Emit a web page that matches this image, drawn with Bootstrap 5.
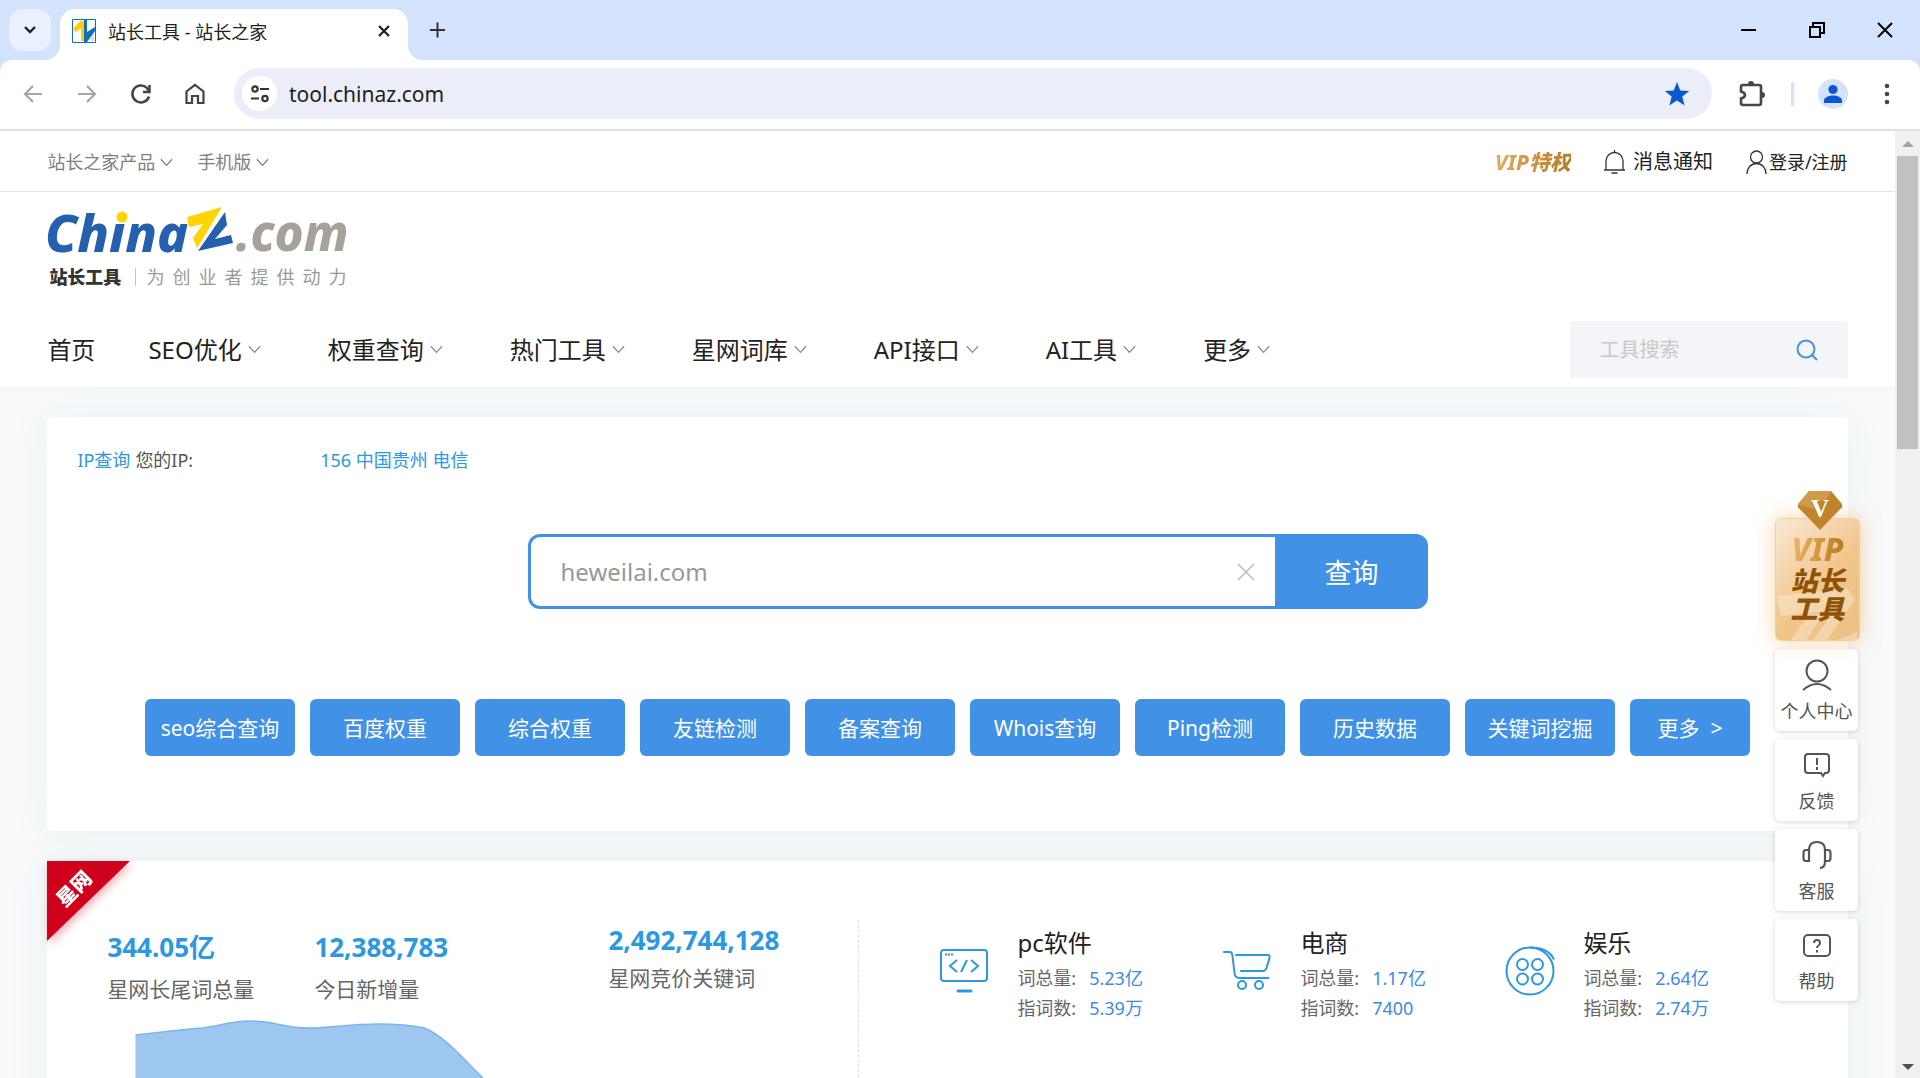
<!DOCTYPE html>
<html lang="zh-CN">
<head>
<meta charset="utf-8">
<meta name="viewport" content="width=device-width, initial-scale=1">
<title>站长工具 - 站长之家</title>
<link href="https://cdn.jsdelivr.net/npm/bootstrap@5.3.0/dist/css/bootstrap.min.css" rel="stylesheet">
<style>
:root { --blue: #4191e6; --sky: #2b98e2; --ink: #222; --muted: #666; }
body { font-family: "Noto Sans", "Noto Sans CJK SC", sans-serif; font-weight: 400; font-size: 18px; line-height: 28px; color: var(--ink); background: #d3e2fd; }
a { color: inherit; text-decoration: none; }
svg { display: block; flex: none; }
button { font-family: inherit; }
.plain-btn { border: 0; background: none; padding: 0; color: inherit; display: flex; align-items: center; justify-content: center; }

/* browser window */
.tab-strip { height: 60px; padding: 9px 0 0 9px; }
.tab-search { width: 42px; height: 42px; border-radius: 14px; background: #e9f1fe; }
.open-tab { position: relative; width: 348px; height: 51px; margin-left: 9px; padding: 0 16px 8px 12px; border-radius: 15px 15px 0 0; background: #fff; }
.open-tab::before, .open-tab::after { content: ""; position: absolute; bottom: 0; width: 15px; height: 15px; }
.open-tab::before { left: -15px; background: radial-gradient(circle at 0 0, transparent 15px, #fff 15px); }
.open-tab::after { right: -15px; background: radial-gradient(circle at 100% 0, transparent 15px, #fff 15px); }
.tab-name { font-size: 18px; margin-left: 12px; padding-top: 2px; }
.new-tab { margin-left: 22px; }
.win-keys { gap: 52px; padding: 0 27px 9px 0; }
.tool-row { height: 71px; background: #fff; border-bottom: 2px solid #e0e0e0; border-radius: 12px 12px 0 0; padding: 0 30px 2px 22px; }
.tool-keys { gap: 31px; }
.address { height: 51px; border-radius: 26px; background: #ebeef8; margin-left: 27px; padding: 0 22px 0 8px; }
.site-info { width: 35px; height: 35px; border-radius: 50%; background: #fff; }
.address input { border: 0; background: none; outline: 0; font-size: 21px; color: #1f1f1f; margin-left: 12px; padding: 0; }
.tool-end { margin-left: 27px; }
.tool-split { width: 3px; height: 24px; border-radius: 2px; background: #d3e2fd; margin: 0 24px 0 25px; }
.avatar { width: 30px; height: 30px; border-radius: 50%; background: #d3e2fd; margin-right: 36px; }
.scroll-rail { width: 25px; background: #f0f0f0; padding: 10px 2px 8px; }
.scroll-thumb { width: 21px; height: 293px; background: #c1c1c1; margin-top: 9px; }

/* site */
.site { background: #f8fafc; min-height: 0; }
.wrap { width: 95%; margin: 0 auto; }
.top-line { height: 61px; border-bottom: 1px solid #e8e8e8; padding-top: 2px; }
.top-line a { gap: 5px; }
.top-left { gap: 24px; color: #7b8088; }
.top-right { gap: 33px; }
.gold { background: linear-gradient(100deg, #e3ae63, #b87a22); -webkit-background-clip: text; background-clip: text; color: transparent; font-weight: 800; font-style: italic; }
.top-right .gold { font-size: 21px; }
.top-right .notice { font-size: 20px; gap: 8px; }
.top-right .signin { gap: 2px; }
.masthead { height: 195px; background: #fff; box-shadow: 0 2px 6px rgba(40,60,80,.04); }
.logo-box { padding-top: 13px; }
.logo-word { font: italic 800 52px "Noto Sans", sans-serif; overflow: visible; }
.logo-word .tail { font-size: 49px; }
.logo-tag { height: 20px; font-size: 18px; line-height: 20px; margin-top: 8px; padding-left: 2px; }
.logo-tag b { font-weight: 800; color: #333; }
.logo-tag i { width: 1px; height: 18px; background: #c4c4c4; margin: 0 10px 0 14px; }
.logo-tag .motto { gap: 8px; color: #9a9a9a; }
.main-nav { margin-top: 34px; font-size: 24px; line-height: 34px; }
.main-nav ul { gap: 53px; }
.main-nav li a { gap: 6px; }
.main-nav .drops { padding-right: 14px; }
.site-search { width: 278px; height: 57px; background: #f3f5f9; border-radius: 4px 4px 0 0; padding: 0 30px; }
.site-search input { border: 0; outline: 0; background: none; padding: 0; font-size: 20px; }
.site-search input::placeholder { color: #c8c8c8; }
.panel { background: #fff; border-radius: 5px; box-shadow: 0 0 45px rgba(20,100,90,.06); margin-top: 30px; position: relative; }
.panel-query { height: 414px; padding: 29px 30px; }
.ip-line { color: #555; gap: 5px; }
.ip-line a { color: var(--sky); }
.ip-line .where { margin-left: 122px; }
.query-form { width: 900px; height: 75px; margin: 60px auto 0; border: 3px solid var(--blue); border-radius: 12px; background: var(--blue); overflow: hidden; }
.query-field { background: #fff; padding: 0 20px 0 30px; }
.query-field input { border: 0; outline: 0; padding: 0; font-size: 24px; color: #999; background: none; }
.query-form .go { width: 150px; border: 0; background: var(--blue); color: #fff; font-size: 27px; padding: 3px 0 0 4px; }
.quick { gap: 15px; margin-top: 90px; }
.quick .btn { width: 150px; height: 57px; background: var(--blue); border: 0; border-radius: 6px; color: #fff; font-size: 21px; line-height: 58px; padding: 0; white-space: nowrap; }
.quick .btn-more { width: 120px; }
.query-shift { padding-left: 60px; }
.panel-data { height: 360px; border-radius: 0; }
.ribbon { position: absolute; left: 0; top: 0; filter: drop-shadow(2px 4px 4px rgba(208,0,30,.3)); }
.ribbon text { font: 800 20px "Noto Sans CJK SC", sans-serif; fill: #fff; }
.totals { width: 811px; padding: 67px 0 0 60px; }
.totals strong { display: block; font-size: 26px; line-height: 38px; font-weight: 700; color: var(--sky); }
.totals span { display: block; font-size: 21px; line-height: 30px; color: var(--muted); margin-top: 8px; }
.total-a { width: 207px; }
.total-b { width: 294px; }
.totals .high { margin-top: -7px; }
.totals .high span { margin-top: 4px; }
.trend { margin: 12px 0 0 28px; }
.fields { border-left: 1px dashed #ddd; margin-top: 59px; padding: 6px 0 0 80px; }
.field { width: 283px; gap: 28px; }
.field svg { margin-top: 20px; width: 50px; }
.field h2 { font-size: 24px; line-height: 34px; font-weight: 400; margin: 0 0 3px; }
.field p { margin: 0; line-height: 30px; color: var(--muted); }
.field a { color: #3c8ae8; margin-left: 13px; }

/* floating column at the right edge */
.float-col { position: absolute; right: 36px; top: 360px; width: 84px; }
.vip-card { display: block; position: relative; width: 85px; height: 123px; margin: 27px 0 8px; border-radius: 6px; border: 1px solid #f5cf9b; background: linear-gradient(135deg, #fae9d6, #f1c58b 55%, #edc082); box-shadow: 0 0 20px rgba(245,175,90,.55); text-align: center; padding-top: 12px; font-style: italic; font-weight: 900; font-size: 27px; line-height: 28px; color: #8f5307; }
.vip-card .stripes { position: absolute; right: 0; bottom: 0; }
.vip-card .caption { position: relative; display: block; }
.vip-card .gem { position: absolute; left: 22px; top: -28px; }
.vip-card .gem text { font: 700 25px "Liberation Serif", serif; fill: #fff; }
.vip-card .gold { display: block; font-size: 32px; line-height: 36px; background-image: linear-gradient(100deg, #f0b565 20%, #b87a22 80%); }
.side-key { width: 83px; height: 82px; margin-bottom: 8px; border-radius: 5px; background: #fff; box-shadow: 0 1px 5px rgba(0,0,0,.16); color: #555; padding: 10px 0 6px; white-space: nowrap; }
</style>
<script src="https://cdn.jsdelivr.net/npm/bootstrap@5.3.0/dist/js/bootstrap.bundle.min.js"></script>
</head>
<body class="vh-100 d-flex flex-column overflow-hidden">
<svg width="0" height="0" class="position-absolute" aria-hidden="true">
  <symbol id="chev" viewBox="0 0 14 9"><path d="M1 1l6 6.500L13 1" fill="none" stroke="currentColor" stroke-width="1.300"/></symbol>
</svg>

<div class="tab-strip d-flex align-items-start flex-shrink-0">
  <button class="plain-btn tab-search" aria-label="搜索标签页"><svg width="14" height="10" viewBox="0 0 14 10"><path d="M2 2l5 5 5-5" fill="none" stroke="#1f1f1f" stroke-width="2.400"/></svg></button>
  <div class="open-tab d-flex align-items-center">
    <svg width="24" height="24" viewBox="0 0 24 24"><path d="M.5 .5h23v23H.5z" fill="#fff" stroke="#0f6fb8"/><path d="M1 10L8 2h4v20H9V9l-5 4z" fill="#fc0"/><path d="M12 1h3v12l8-5v4l-8 11h-3z" fill="#0f6fb8"/><path d="M17 21l5-7v8z" fill="#cfe2f3"/></svg>
    <span class="tab-name flex-grow-1">站长工具 - 站长之家</span>
    <button class="plain-btn" aria-label="关闭标签页"><svg width="16" height="16" viewBox="0 0 16 16"><path d="M3 3l10 10M13 3L3 13" stroke="#1f1f1f" stroke-width="2.200"/></svg></button>
  </div>
  <button class="plain-btn new-tab" aria-label="新建标签页"><svg width="16" height="42" viewBox="0 0 16 42"><path d="M0 21h15M7.500 13.500v15" stroke="#333" stroke-width="2"/></svg></button>
  <div class="win-keys d-flex align-items-center ms-auto h-100">
    <button class="plain-btn" aria-label="最小化"><svg width="16" height="16"><path d="M0 8h15" stroke="#000" stroke-width="2"/></svg></button>
    <button class="plain-btn" aria-label="还原"><svg width="16" height="16" fill="none" stroke="#000" stroke-width="2"><path d="M1 5h10v10H1zM4 4V1h11v10h-3"/></svg></button>
    <button class="plain-btn" aria-label="关闭"><svg width="16" height="16"><path d="M1 1l14 14M15 1L1 15" stroke="#000" stroke-width="2"/></svg></button>
  </div>
</div>

<div class="tool-row d-flex align-items-center flex-shrink-0">
  <div class="tool-keys d-flex">
    <button class="plain-btn" aria-label="后退"><svg width="23" height="22" fill="none" stroke="#a6a6a6" stroke-width="2.200"><path d="M20 11H3M11 3l-8 8 8 8"/></svg></button>
    <button class="plain-btn" aria-label="前进"><svg width="23" height="22" fill="none" stroke="#a6a6a6" stroke-width="2.200"><path d="M2 11h17M11 3l8 8-8 8"/></svg></button>
    <button class="plain-btn" aria-label="刷新"><svg width="23" height="22" fill="none" stroke="#444" stroke-width="2.500"><path d="M19 13.500A8.500 8.500 0 1 1 17 5l2 3"/><path d="M19.500 2v7H13"/></svg></button>
    <button class="plain-btn" aria-label="主页"><svg width="23" height="22" fill="none" stroke="#444" stroke-width="2.200"><path d="M2.500 20V8.500L11 2l8.500 6.500V20H14v-7H8v7z"/></svg></button>
  </div>
  <div class="address d-flex align-items-center flex-grow-1">
    <button class="plain-btn site-info" aria-label="网站信息"><svg width="20" height="18" fill="none" stroke="#333" stroke-width="2.200"><circle cx="5" cy="4" r="2.700"/><path d="M10 4h9M1 13.500h8"/><circle cx="15" cy="13.500" r="2.700"/></svg></button>
    <input class="flex-grow-1" type="text" aria-label="地址栏" value="tool.chinaz.com">
    <button class="plain-btn" aria-label="收藏"><svg width="26" height="26" viewBox="0 0 24 24"><path d="M12 1l3 7.700 8.300.5-6.400 5.200 2.100 8.100L12 18l-7 4.500 2.100-8.100L.7 9.200 9 8.700z" fill="#0b57d0"/></svg></button>
  </div>
  <div class="tool-end d-flex align-items-center">
    <button class="plain-btn" aria-label="扩展程序"><svg width="27" height="28" viewBox="0 0 27 28"><path d="M4 5h16q2 0 2 2v16q0 2-2 2H4q-2 0-2-2v-4.500q4-1 4-3.500t-4-3.500V7q0-2 2-2z" fill="none" stroke="#474747" stroke-width="2.600"/><path d="M9 4a3 3 0 0 1 6 0zM23 12a3 3 0 0 1 0 6z" fill="#474747"/></svg></button>
    <span class="tool-split"></span>
    <button class="plain-btn avatar" aria-label="个人资料"><svg width="20" height="20" fill="#0b57d0"><circle cx="10" cy="5.500" r="4.600"/><path d="M1 19v-2.500C1 13 6 11.500 10 11.500s9 1.500 9 5V19z"/></svg></button>
    <button class="plain-btn" aria-label="菜单"><svg width="6" height="22" fill="#474747"><circle cx="3" cy="3" r="2.300"/><circle cx="3" cy="11" r="2.300"/><circle cx="3" cy="19" r="2.300"/></svg></button>
  </div>
</div>

<div class="site d-flex flex-grow-1 position-relative">
  <div class="flex-grow-1 overflow-hidden position-relative">
    <header>
      <div class="top-line bg-white">
        <div class="wrap d-flex justify-content-between align-items-center h-100">
          <div class="top-left d-flex">
            <a href="#" class="d-flex align-items-center">站长之家产品<svg width="13" height="9"><use href="#chev"/></svg></a>
            <a href="#" class="d-flex align-items-center">手机版<svg width="13" height="9"><use href="#chev"/></svg></a>
          </div>
          <div class="top-right d-flex align-items-center">
            <a href="#" class="gold">VIP特权</a>
            <a href="#" class="notice d-flex align-items-center"><svg width="21" height="24" fill="none" stroke="#333" stroke-width="1.300"><path d="M0 20h21M2 20v-9a8.500 8.500 0 0 1 17 0v9M10.500 0v3M7.500 23h6"/></svg>消息通知</a>
            <a href="#" class="signin d-flex align-items-center"><svg width="21" height="24" fill="none" stroke="#333" stroke-width="1.300"><circle cx="10.500" cy="7" r="6"/><path d="M1 24c0-6 4-10.500 9.500-10.500S20 18 20 24"/></svg>登录/注册</a>
          </div>
        </div>
      </div>
      <div class="masthead">
        <div class="wrap">
          <div class="logo-box">
            <a href="#" class="d-block">
              <svg width="302" height="54" viewBox="0 0 302 54" class="logo-word">
                <text x="-2" y="47" fill="#2560b0">China</text>
                <circle cx="75" cy="12" r="5.500" fill="#ffd400"/>
                <path d="M140 12L175 2 150 43 146 33 156 19 142 22z" fill="#ffd400"/>
                <path d="M178 7L180 20 168 34 184 30 186 38 151 46z" fill="#2560b0"/>
                <text class="tail" x="189" y="46" fill="#a8a19b">.com</text>
              </svg>
              <span class="logo-tag d-flex align-items-center"><b>站长工具</b><i></i><span class="motto d-flex"><span>为</span><span>创</span><span>业</span><span>者</span><span>提</span><span>供</span><span>动</span><span>力</span></span></span>
            </a>
          </div>
          <nav class="main-nav d-flex align-items-center justify-content-between">
            <ul class="list-unstyled d-flex mb-0">
              <li><a href="#">首页</a></li>
              <li class="drops"><a href="#" class="d-flex align-items-center">SEO优化<svg width="13" height="9" color="#888"><use href="#chev"/></svg></a></li>
              <li class="drops"><a href="#" class="d-flex align-items-center">权重查询<svg width="13" height="9" color="#888"><use href="#chev"/></svg></a></li>
              <li class="drops"><a href="#" class="d-flex align-items-center">热门工具<svg width="13" height="9" color="#888"><use href="#chev"/></svg></a></li>
              <li class="drops"><a href="#" class="d-flex align-items-center">星网词库<svg width="13" height="9" color="#888"><use href="#chev"/></svg></a></li>
              <li class="drops"><a href="#" class="d-flex align-items-center">API接口<svg width="13" height="9" color="#888"><use href="#chev"/></svg></a></li>
              <li class="drops"><a href="#" class="d-flex align-items-center">AI工具<svg width="13" height="9" color="#888"><use href="#chev"/></svg></a></li>
              <li class="drops"><a href="#" class="d-flex align-items-center">更多<svg width="13" height="9" color="#888"><use href="#chev"/></svg></a></li>
            </ul>
            <form class="site-search d-flex align-items-center">
              <input class="flex-grow-1 w-100" type="text" placeholder="工具搜索" aria-label="工具搜索">
              <button class="plain-btn" type="button" aria-label="搜索"><svg width="22" height="22" fill="none" stroke="#4191e6" stroke-width="2"><circle cx="10" cy="10" r="8.500"/><path d="M16 16l5 5"/></svg></button>
            </form>
          </nav>
        </div>
      </div>
    </header>

    <main class="wrap">
      <section class="panel panel-query">
        <div class="ip-line d-flex"><a href="#">IP查询</a><span>您的IP:</span><a href="#" class="where">156 中国贵州 电信</a></div>
        <div class="query-shift">
          <form class="query-form d-flex">
            <div class="query-field d-flex align-items-center flex-grow-1">
              <input class="flex-grow-1" type="text" aria-label="域名" value="heweilai.com">
              <button class="plain-btn" type="button" aria-label="清空"><svg width="18" height="18"><path d="M1 1l16 16M17 1L1 17" stroke="#bbb" stroke-width="1.600"/></svg></button>
            </div>
            <button class="go" type="button">查询</button>
          </form>
        </div>
        <div class="quick d-flex justify-content-center">
          <a href="#" class="btn">seo综合查询</a><a href="#" class="btn">百度权重</a><a href="#" class="btn">综合权重</a><a href="#" class="btn">友链检测</a><a href="#" class="btn">备案查询</a><a href="#" class="btn">Whois查询</a><a href="#" class="btn">Ping检测</a><a href="#" class="btn">历史数据</a><a href="#" class="btn">关键词挖掘</a><a href="#" class="btn btn-more">更多 &nbsp;&gt;</a>
        </div>
      </section>

      <section class="panel panel-data d-flex">
        <svg class="ribbon" width="84" height="82"><path d="M0 0h83L0 80z" fill="#d0021b"/><text transform="translate(18 47) rotate(-45)">星网</text></svg>
        <div class="totals flex-shrink-0">
          <div class="d-flex">
            <div class="total-a"><strong>344.05亿</strong><span>星网长尾词总量</span></div>
            <div class="total-b"><strong>12,388,783</strong><span>今日新增量</span></div>
            <div class="high"><strong>2,492,744,128</strong><span>星网竞价关键词</span></div>
          </div>
          <svg class="trend" width="420" height="140" viewBox="0 0 420 140"><path d="M.5 19C30 16 50 13 67 12 85 10 95 5 115 5 140 5 148 12 175 12 195 12 215 8 243 8 265 8 280 10 289 12 310 20 330 45 346 60 370 90 390 120 405 140H.5z" fill="#9dc7f1"/><path d="M.5 19C30 16 50 13 67 12 85 10 95 5 115 5 140 5 148 12 175 12 195 12 215 8 243 8 265 8 280 10 289 12 310 20 330 45 346 60 370 90 390 120 405 140" fill="none" stroke="#7db4ec" stroke-width="1.500"/></svg>
        </div>
        <div class="fields d-flex flex-grow-1">
          <div class="field d-flex"><svg width="50" height="50" fill="none" stroke="#2b98e2" stroke-width="2"><rect x="2" y="4" width="46" height="31" rx="3"/><path d="M18 14l-7 6 7 6M32 14l7 6-7 6M28 14l-6 12"/><path d="M19 45h13" stroke-width="3" stroke-linecap="round"/><path d="M6 8.500h9" stroke-dasharray="2 1"/></svg><div><h2>pc软件</h2><p>词总量:<a href="#">5.23亿</a></p><p>指词数:<a href="#">5.39万</a></p></div></div>
          <div class="field d-flex"><svg width="50" height="50" fill="none" stroke="#2b98e2" stroke-width="2"><path d="M2 6h6q2 0 2.500 4l2 17q.5 5 5 5h29M14 9h32q2 0 1.500 3l-3 10q-1 3-4 3H19" stroke-linecap="round"/><circle cx="20" cy="39" r="4"/><circle cx="37" cy="39" r="4"/></svg><div><h2>电商</h2><p>词总量:<a href="#">1.17亿</a></p><p>指词数:<a href="#">7400</a></p></div></div>
          <div class="field d-flex"><svg width="50" height="50" fill="none" stroke="#2b98e2" stroke-width="2"><circle cx="25" cy="25" r="23.500"/><path d="M25 1.500c11 0 20 3 24 12"/><circle cx="17.500" cy="18.500" r="5.500"/><circle cx="32.500" cy="18.500" r="5.500"/><circle cx="17.500" cy="33" r="5.500"/><circle cx="32.500" cy="33" r="5.500"/></svg><div><h2>娱乐</h2><p>词总量:<a href="#">2.64亿</a></p><p>指词数:<a href="#">2.74万</a></p></div></div>
        </div>
      </section>
    </main>

    <aside class="float-col">
      <a href="#" class="vip-card">
        <svg class="stripes" width="82" height="54" fill="#fff" fill-opacity=".3"><path d="M0 10L70 2l8 12-28 40H36l22-30L4 30zM14 54l18-26h14L30 54zM60 54l20-8v8z"/></svg>
        <svg class="gem" width="44" height="39" viewBox="0 0 44 36" preserveAspectRatio="none"><path d="M11 0h22l11 12v3L22 36 0 15v-3z" fill="#c1842c"/><path d="M11 0h22l-5 9H16zM0 13l11-13 5 9 6 9z" fill="#d09a4c"/></svg>
        <svg class="gem" width="44" height="39"><text x="13" y="26">V</text></svg>
        <span class="caption"><span class="gold">VIP</span>站长<br>工具</span>
      </a>
      <a href="#" class="side-key d-flex flex-column align-items-center justify-content-between"><svg width="30" height="32" fill="none" stroke="#555" stroke-width="2"><circle cx="15" cy="12" r="10.500"/><path d="M1 31q14-12 28 0"/></svg>个人中心</a>
      <a href="#" class="side-key d-flex flex-column align-items-center justify-content-between"><svg width="26" height="32" fill="none" stroke="#555" stroke-width="2"><path d="M4 5h18q3 0 3 3v13q0 3-3 3h-1l-2 3-2-3H4q-3 0-3-3V8q0-3 3-3zM13 9v7M13 18v3"/></svg>反馈</a>
      <a href="#" class="side-key d-flex flex-column align-items-center justify-content-between"><svg width="30" height="32" fill="none" stroke="#555" stroke-width="2.200"><path d="M7 11v11H4q-2.500 0-2.500-3v-5q0-3 2.500-3h3q0-8 8-8t8 8v11q0 7-5 7M23 11h3q2.500 0 2.500 3v5q0 3-2.500 3h-3"/></svg>客服</a>
      <a href="#" class="side-key d-flex flex-column align-items-center justify-content-between"><svg width="28" height="32" fill="none" stroke="#555" stroke-width="2"><rect x="1" y="6" width="26" height="21" rx="4"/><path d="M11 14q0-3 3-3t3 3q0 1.500-1.500 2.500T14 19M14 21v2.500"/></svg>帮助</a>
    </aside>
  </div>
  <div class="scroll-rail d-flex flex-column align-items-center flex-shrink-0" aria-hidden="true">
    <svg width="12" height="6"><path d="M0 6l6-6 6 6z" fill="#a3a3a3"/></svg>
    <div class="scroll-thumb"></div>
    <svg class="mt-auto" width="12" height="6"><path d="M0 0l6 6 6-6z" fill="#505050"/></svg>
  </div>
</div>
</body>
</html>
